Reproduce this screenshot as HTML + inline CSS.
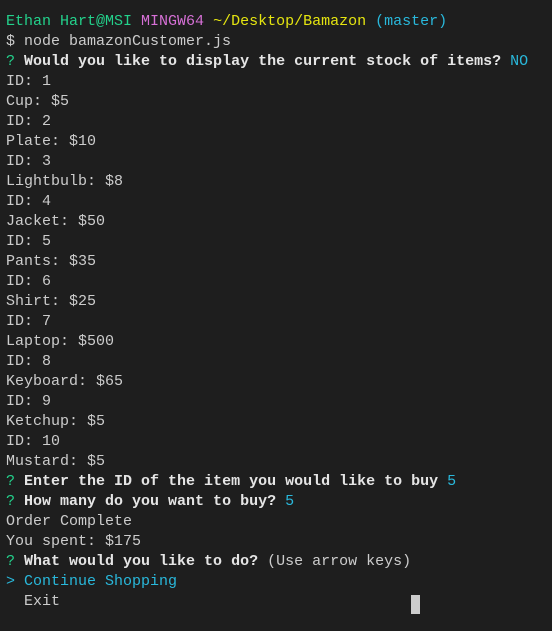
<!DOCTYPE html><html><head><style>
html,body{margin:0;background:#1e1e1e;width:552px;height:631px;overflow:hidden}
pre{margin:0;padding:12px 0 0 6px;font:15px/20px "Liberation Mono",monospace;color:#cccccc;white-space:pre}
.g{color:#23d18b}.m{color:#d670d6}.y{color:#e5e510}.c{color:#29b8db}b{color:#e5e5e5}
.cur{position:absolute;left:411px;top:595px;width:9px;height:19px;background:#cccccc}
</style></head><body><pre><span class="g">Ethan Hart@MSI</span> <span class="m">MINGW64</span> <span class="y">~/Desktop/Bamazon</span> <span class="c">(master)</span>
$ node bamazonCustomer.js
<span class="g">?</span> <b>Would you like to display the current stock of items?</b> <span class="c">NO</span>
ID: 1
Cup: $5
ID: 2
Plate: $10
ID: 3
Lightbulb: $8
ID: 4
Jacket: $50
ID: 5
Pants: $35
ID: 6
Shirt: $25
ID: 7
Laptop: $500
ID: 8
Keyboard: $65
ID: 9
Ketchup: $5
ID: 10
Mustard: $5
<span class="g">?</span> <b>Enter the ID of the item you would like to buy</b> <span class="c">5</span>
<span class="g">?</span> <b>How many do you want to buy?</b> <span class="c">5</span>
Order Complete
You spent: $175
<span class="g">?</span> <b>What would you like to do?</b> (Use arrow keys)
<span class="c">&gt; Continue Shopping</span>
  Exit</pre><div class="cur"></div></body></html>
